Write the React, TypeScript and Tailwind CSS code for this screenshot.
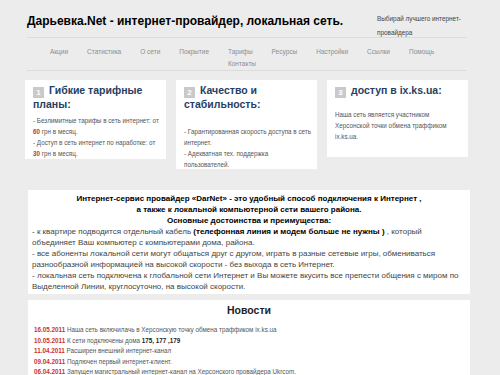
import React from "react";

const navItems = [
  "Акции",
  "Статистика",
  "О сети",
  "Покрытие",
  "Тарифы",
  "Ресурсы",
  "Настройки",
  "Ссылки",
  "Помощь",
  "Контакты",
];

const news = [
  { date: "16.05.2011", text: <>Наша сеть включилачь в Херсонскую точку обмена траффиком ix.ks.ua</> },
  { date: "10.05.2011", text: <>К сети подключены дома <b className="text-[#222]">175, 177 ,179</b></> },
  { date: "11.04.2011", text: <>Расширен внешний интернет-канал</> },
  { date: "09.04.2011", text: <>Подлючен первый интернет-клиент.</> },
  { date: "06.04.2011", text: <>Запущен магистральный интернет-канал на Херсонского провайдера Ukrcom.</> },
];

const Badge = ({ n }: { n: number }) => (
  <span className="inline-block w-[11px] h-[11px] bg-[#c9c9c9] text-white text-[8px] font-bold leading-[11px] text-center mr-[5px] align-[-1px]">
    {n}
  </span>
);

const App = () => {
  return (
    <div className="min-h-screen w-[500px] bg-[#ececec] font-['Liberation_Sans',Arial,sans-serif] pb-4">
      {/* header */}
      <div className="ml-[27px] w-[440px]">
        <div className="h-[38px] flex justify-between items-start border-b border-[#dcdcdc]">
          <h1 className="mt-[14px] text-[12px] leading-[15px] font-bold text-black whitespace-nowrap">
            Дарьевка.Net - интернет-провайдер, локальная сеть.
          </h1>
          <p className="mt-[12px] w-[90px] text-[6.4px] leading-[14px] text-[#444]">
            Выбирай лучшего интернет-провайдера
          </p>
        </div>
        <div className="h-[33px] border-b border-[#dcdcdc] pt-[9px] pl-[10px] pr-[20px] flex flex-wrap justify-center gap-x-[19px] text-[6.5px] leading-[10px] text-[#8c8c8c]">
          {navItems.map((item) => (
            <span key={item}>{item}</span>
          ))}
        </div>
      </div>

      {/* cards */}
      <div className="mt-[9px] ml-[25px] w-[443px] grid grid-cols-3 gap-[10px] items-start">
        <div className="bg-white h-[79px] px-[8px] pt-[4px]">
          <h2 className="text-[10.5px] leading-[12px] font-bold text-[#26405f]">
            <Badge n={1} />
            Гибкие тарифные планы:
          </h2>
          <div className="mt-[5px] text-[6.3px] leading-[11px] text-[#555] whitespace-nowrap">
            <p>- Безлимитные тарифы в сеть интернет: от</p>
            <p>
              <b className="text-[#d0312d]">60</b> грн в месяц.
            </p>
            <p>- Доступ в сеть интернет по наработке: от</p>
            <p>
              <b className="text-[#d0312d]">30</b> грн в месяц.
            </p>
          </div>
        </div>
        <div className="bg-white h-[89px] px-[8px] pt-[4px]">
          <h2 className="text-[10.5px] leading-[12px] font-bold text-[#26405f]">
            <Badge n={2} />
            Качество и стабильность:
          </h2>
          <div className="mt-[16px] text-[6.3px] leading-[11px] text-[#555] whitespace-nowrap">
            <p>- Гарантированная скорость доступа в сеть</p>
            <p>интернет.</p>
            <p>- Адекватная тех. поддержка</p>
            <p>пользователей.</p>
          </div>
        </div>
        <div className="bg-white h-[77px] px-[8px] pt-[4px]">
          <h2 className="text-[10.5px] leading-[12px] font-bold text-[#26405f]">
            <Badge n={3} />
            доступ в ix.ks.ua:
          </h2>
          <div className="mt-[11px] text-[6.3px] leading-[11px] text-[#555] whitespace-nowrap">
            <p>Наша сеть является участником</p>
            <p>Херсонской точки обмена траффиком</p>
            <p>ix.ks.ua.</p>
          </div>
        </div>
      </div>

      {/* about */}
      <div className="mt-[21px] ml-[28px] w-[442px] bg-white h-[104px] px-[4px] pt-[3px] text-[8px] leading-[11px] text-[#444]">
        <div className="text-center font-bold text-black">
          <p>Интернет-сервис провайдер «DarNet» - это удобный способ подключения к Интернет ,</p>
          <p>а также к локальной компьютерной сети вашего района.</p>
          <p>Основные достоинства и преимущества:</p>
        </div>
        <p>
          - к квартире подводится отдельный кабель{" "}
          <b className="text-black">(телефонная линия и модем больше не нужны )</b> , который
          объединяет Ваш компьютер с компьютерами дома, района.
        </p>
        <p>
          - все абоненты локальной сети могут общаться друг с другом, играть в разные сетевые игры, обмениваться
          разнообразной информацией на высокой скорости - без выхода в сеть Интернет.
        </p>
        <p>
          - локальная сеть подключена к глобальной сети Интернет и Вы можете вкусить все препести общения с миром по
          Выделенной Линии, круглосуточно, на высокой скорости.
        </p>
      </div>

      {/* news */}
      <div className="mt-[6px] ml-[28px] w-[442px] bg-white pt-[3px] pb-[6px] px-[6px]">
        <h2 className="text-center text-[10.5px] leading-[14px] font-bold text-[#222]">Новости</h2>
        <ul className="mt-[8px] text-[6.3px] leading-[10.5px] text-[#555]">
          {news.map((n) => (
            <li key={n.date}>
              <b className="text-[#d0312d]">{n.date}</b> {n.text}
            </li>
          ))}
        </ul>
      </div>
    </div>
  );
};

export default App;
